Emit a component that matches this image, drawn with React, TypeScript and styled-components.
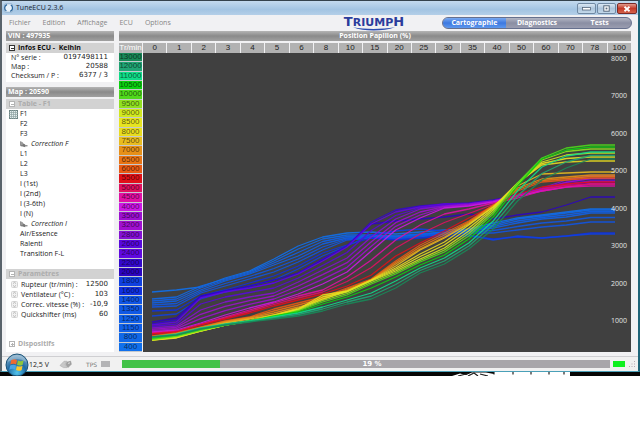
import React from 'react';
import styled, { createGlobalStyle } from 'styled-components';

const UI = '"Open Sans", "Noto Sans", sans-serif';
const WIDE = '"DejaVu Sans", sans-serif';
const NARROW = '"Liberation Sans", Arial, sans-serif';

const Global = createGlobalStyle`
  * { box-sizing: border-box; }
  body { margin: 0; background: #fff; font-family: ${UI}; font-size: 7px; color: #222; }
  button { border: 0; padding: 0; margin: 0; background: none; font: inherit; color: inherit; text-align: left; }
  ul { list-style: none; margin: 0; padding: 0; }
  h1, h2 { margin: 0; font: inherit; }
`;

const Desktop = styled.div`
  background: #fff;
`;

const Window = styled.div`
  display: flex;
  flex-direction: column;
  background: #f1f1f3;
  border-top: 1px solid #34424c;
  border-left: 2px solid #59636b;
  border-right: 2px solid #1f6478;
  border-bottom: 1px solid #4aa0b8;
`;

const TitleBar = styled.header`
  display: flex;
  align-items: center;
  height: 14px;
  padding: 0 1px 0 2px;
  gap: 3px;
  background: linear-gradient(#c3d9ee, #a3c4e2 60%, #b4cfe8);
`;

const Title = styled.h1`
  flex: 1;
  font-size: 7px;
  line-height: 12px;
  color: #1a2530;
`;

const WindowButtons = styled.div`
  display: flex;
  align-self: flex-start;
  margin-top: 2px;
`;

const WindowButton = styled.button<{ $close?: boolean }>`
  display: grid;
  place-items: center;
  width: ${(p) => (p.$close ? 20 : 19)}px;
  height: 11px;
  border: 1px solid ${(p) => (p.$close ? '#7b2a26' : '#7089a3')};
  border-radius: 2px;
  background: ${(p) => (p.$close ? 'linear-gradient(#e29a8c, #c43a28 50%, #d4644c)' : 'linear-gradient(#dbe8f4, #adc5dc 50%, #c3d9ea)')};
  & + & { margin-left: 1px; }
`;

const MenuBar = styled.div`
  display: flex;
  align-items: center;
  height: 16px;
  padding: 0 6px 0 7px;
`;

const Menus = styled.nav`
  display: flex;
  flex: 1;
  gap: 12px;
`;

const MenuButton = styled.button`
  font-size: 7px;
  line-height: 12px;
  color: #868686;
`;

const Tabs = styled.div`
  display: flex;
  width: 190px;
  height: 12px;
  margin-left: 34px;
  border: 1px solid #66708e;
  border-radius: 6px;
  overflow: hidden;
  background: linear-gradient(#b3b6c4, #8a8ea3 50%, #9a9db0);
`;

const Tab = styled.button<{ $active?: boolean }>`
  flex: 1;
  text-align: center;
  font-weight: bold;
  font-size: 7px;
  line-height: 10px;
  color: #fff;
  background: ${(p) => (p.$active ? 'linear-gradient(#79a9f0, #3c78e0 50%, #5e98ee)' : 'none')};
`;

const Body = styled.div`
  display: flex;
  gap: 5px;
  padding: 0 7px 4px 4px;
`;

const Sidebar = styled.aside`
  display: flex;
  flex-direction: column;
  width: 108px;
`;

const Strip = styled.h2<{ $center?: boolean }>`
  height: 10px;
  padding: 0 2px;
  font-weight: bold;
  font-size: 7px;
  line-height: 10px;
  color: #fff;
  text-align: ${(p) => (p.$center ? 'center' : 'left')};
  background: linear-gradient(#b4b4b4, #8a8a8a 50%, #a0a0a0);
`;

const Panel = styled.section<{ $grow?: boolean }>`
  background: #fff;
  margin-top: 2px;
  flex: ${(p) => (p.$grow ? 1 : 'none')};
`;

const InfoPanel = styled(Panel)`
  padding-bottom: 2px;
  margin-bottom: 5px;
`;

const Group = styled.button<{ $strong?: boolean; $plain?: boolean }>`
  display: flex;
  align-items: center;
  gap: 3px;
  width: 100%;
  height: 10px;
  padding-left: 3px;
  font-weight: bold;
  font-size: 7px;
  line-height: 10px;
  white-space: pre;
  color: ${(p) => (p.$strong ? '#111' : '#acacac')};
  background: ${(p) => (p.$plain ? 'none' : '#d2d2d2')};
`;

const Facts = styled.table<{ $inset?: boolean }>`
  width: 100%;
  border-collapse: collapse;
  th, td {
    padding: 0;
    height: ${(p) => (p.$inset ? 10 : 9)}px;
    line-height: 9px;
    font-size: 7px;
    vertical-align: middle;
    white-space: nowrap;
  }
  th { font-weight: normal; text-align: left; padding-left: 5px; }
  td { text-align: right; padding-right: 6px; font-family: ${WIDE}; }
`;

const ParamName = styled.span`
  display: flex;
  align-items: center;
  gap: 3px;
`;

const Tree = styled.ul`
  padding-bottom: 10px;
`;

const TreeRow = styled.button<{ $child?: boolean }>`
  display: flex;
  align-items: center;
  height: 10px;
  width: 100%;
  line-height: 10px;
  font-size: 7px;
  font-style: ${(p) => (p.$child ? 'italic' : 'normal')};
  color: #222;
`;

const Gutter = styled.span<{ $child?: boolean }>`
  display: flex;
  width: ${(p) => (p.$child ? 25 : 14)}px;
  padding-left: ${(p) => (p.$child ? 14 : 3)}px;
`;

const Devices = styled.div`
  padding: 20px 0 3px;
`;

const Main = styled.main`
  flex: 1;
  display: flex;
  flex-direction: column;
  min-width: 0;
`;

const Plot = styled.div`
  flex: 1;
  display: grid;
  grid-template-columns: 24px 1fr;
  grid-template-rows: 10px 1fr;
  margin-top: 2px;
`;

const Corner = styled.div`
  margin-right: 1px;
  font-family: ${NARROW};
  font-size: 8px;
  line-height: 10px;
  text-align: center;
  color: #fff;
  background: #b4b4b4;
`;

const Throttle = styled.div`
  display: grid;
  grid-template-columns: repeat(20, 1fr);
  gap: 1px;
`;

const ThrottleCell = styled.div`
  font-family: ${NARROW};
  font-size: 8px;
  line-height: 10px;
  text-align: center;
  color: #222;
  background: #b2b2b2;
`;

const RpmColumn = styled.div`
  display: grid;
  grid-template-rows: repeat(32, 1fr);
  background: #c4c8cc;
  margin-right: 1px;
`;

const RpmCell = styled.div<{ $color: string }>`
  border-bottom: 1px solid #c4c8cc;
  font-family: ${NARROW};
  font-size: 8px;
  line-height: 8px;
  text-align: center;
  color: rgba(0, 0, 0, 0.62);
  background: ${(p) => p.$color};
`;

const Chart = styled.div`
  position: relative;
  background: #404040;
`;

const Curves = styled.svg`
  display: block;
  width: 100%;
  height: 299px;
`;

const Scale = styled.div`
  position: absolute;
  top: 0;
  right: 4px;
  bottom: 26px;
  display: flex;
  flex-direction: column;
  justify-content: space-between;
  font-size: 7px;
  line-height: 11px;
  color: #e4e4e4;
`;

const StatusBar = styled.footer`
  display: flex;
  align-items: center;
  height: 15px;
  padding: 0 2px 0 4px;
  border-top: 1px solid #cfcfd2;
  background: #f1f1f1;
`;

const StatusInfo = styled.div`
  display: flex;
  align-items: center;
  width: 116px;
  padding-left: 23px;
`;

const Volts = styled.span`
  width: 30px;
`;

const Tps = styled.span`
  flex: 1;
  margin-left: 14px;
  font-family: ${WIDE};
  font-size: 6px;
  color: #777;
`;

const TpsBox = styled.span`
  width: 9px;
  height: 6px;
  margin-right: 12px;
  background: #b4b4b6;
`;

const Progress = styled.div`
  flex: 1;
  display: grid;
  height: 8px;
  background: #a8a6aa;
`;

const ProgressFill = styled.div`
  grid-area: 1 / 1;
  background: #42c248;
`;

const ProgressLabel = styled.span`
  grid-area: 1 / 1;
  text-align: center;
  padding-left: 12px;
  font-family: ${WIDE};
  font-weight: bold;
  font-size: 7px;
  line-height: 8px;
  color: #fff;
`;

const Led = styled.span`
  width: 12px;
  height: 6px;
  margin: 0 3px;
  background: #10f020;
`;

const Taskbar = styled.div`
  position: relative;
  display: flex;
  height: 4px;
  background: #050505;
`;

const Orb = styled.button`
  position: absolute;
  left: 5px;
  bottom: -1px;
  height: 24px;
`;

const Thumb = styled.svg`
  margin-left: auto;
  margin-right: 70px;
`;

const AXIS = [0, 1, 2, 3, 4, 5, 6, 8, 10, 15, 20, 25, 30, 35, 40, 50, 60, 70, 78, 100];

const RPM: [number, string][] = [
  [13000, '#188858'], [12000, '#20a474'], [11000, '#10dc88'], [10500, '#0cd010'],
  [10000, '#50d81c'], [9500, '#90e020'], [9000, '#d0e820'], [8500, '#e6e420'],
  [8000, '#e8dc20'], [7500, '#e8bc20'], [7000, '#e69018'], [6500, '#e87414'],
  [6000, '#e85a14'], [5500, '#e01018'], [5000, '#e01060'], [4500, '#e010a4'],
  [4000, '#cc18e4'], [3500, '#9c10d0'], [3200, '#a010d0'], [2800, '#8410d4'],
  [2600, '#5808dc'], [2400, '#6008e0'], [2200, '#3408cc'], [2000, '#2c04c0'],
  [1800, '#1040e0'], [1600, '#1030e0'], [1400, '#1054e4'], [1350, '#1058e4'],
  [1250, '#1060e8'], [1150, '#1060e8'], [800, '#1068e8'], [400, '#1070ec'],
];

/* Measured curves; engine speeds between two of them are interpolated. */
const MEASURED: Record<number, number[]> = {
  13000: [337, 335, 329, 325, 322, 319, 316, 311, 304, 299, 288, 273, 264, 249, 229, 201, 180, 168, 159, 159],
  11000: [337, 334, 328, 324, 321, 317, 313, 307, 300, 293, 281, 268, 258, 243, 221, 191, 167, 156, 152, 152],
  10500: [338, 335, 329, 325, 321, 316, 312, 304, 297, 288, 277, 265, 255, 239, 217, 186, 159, 150, 147, 147],
  10000: [339, 336, 330, 325, 321, 317, 311, 302, 295, 284, 274, 262, 252, 236, 214, 183, 158, 148, 145, 145],
  9000: [340, 337, 331, 325, 321, 317, 310, 299, 292, 281, 271, 259, 248, 231, 210, 184, 162, 155, 153, 153],
  8000: [340, 338, 331, 325, 321, 315, 309, 295, 291, 280, 268, 254, 242, 225, 207, 183, 165, 162, 161, 161],
  7500: [338, 335, 329, 323, 319, 315, 308, 299, 291, 280, 266, 250, 238, 224, 207, 186, 174, 173, 172, 172],
  7000: [337, 334, 328, 322, 318, 313, 307, 300, 290, 280, 264, 249, 237, 223, 206, 188, 179, 177, 175, 175],
  6000: [336, 333, 327, 321, 317, 309, 303, 297, 288, 279, 261, 245, 233, 221, 205, 191, 182, 180, 178, 178],
  5500: [334, 332, 325, 319, 313, 306, 300, 294, 286, 275, 256, 243, 231, 218, 206, 194, 187, 184, 182, 182],
  4500: [333, 331, 324, 317, 310, 303, 296, 290, 277, 260, 240, 225, 214, 209, 203, 198, 191, 187, 186, 186],
  4000: [332, 330, 323, 315, 308, 302, 294, 284, 272, 251, 230, 218, 208, 206, 202, 196, 191, 187, 184, 184],
  2800: [328, 326, 310, 302, 297, 293, 282, 270, 258, 237, 219, 209, 206, 204, 201, 195, 188, 180, 176, 176],
  2400: [325, 322, 298, 292, 288, 283, 274, 261, 247, 224, 212, 207, 204, 204, 201, 196, 190, 184, 181, 181],
  2200: [324, 320, 297, 291, 288, 283, 273, 259, 246, 222, 210, 206, 204, 203, 200, 195, 189, 185, 183, 183],
  2000: [322, 318, 296, 291, 286, 280, 273, 260, 246, 224, 221, 219, 217, 214, 219, 215, 212, 205, 197, 197],
  1800: [316, 314, 299, 292, 286, 280, 269, 256, 246, 235, 231, 229, 231, 235, 240, 236, 238, 236, 234, 234],
  1600: [311, 310, 296, 290, 283, 276, 266, 253, 245, 238, 240, 238, 236, 236, 239, 237, 238, 236, 233, 233],
  1400: [307, 306, 293, 286, 279, 272, 262, 250, 240, 238, 239, 237, 234, 233, 233, 230, 227, 225, 222, 222],
  1250: [303, 301, 290, 281, 274, 265, 256, 244, 238, 237, 237, 235, 233, 231, 228, 223, 219, 217, 213, 213],
  800: [299, 297, 286, 279, 272, 261, 249, 239, 235, 235, 236, 234, 232, 230, 225, 219, 216, 213, 210, 210],
  400: [292, 290, 287, 278, 271, 259, 246, 237, 233, 232, 234, 232, 230, 229, 223, 218, 215, 212, 209, 209],
};

function curveFor(index: number): number[] {
  let above = index;
  let below = index;
  while (!MEASURED[RPM[above][0]]) above -= 1;
  while (!MEASURED[RPM[below][0]]) below += 1;
  const a = MEASURED[RPM[above][0]];
  const b = MEASURED[RPM[below][0]];
  const t = above === below ? 0 : (index - above) / (below - above);
  return a.map((v, i) => v + (b[i] - v) * t);
}

const STEP = 24.37;
const points = (ys: number[]) => ys.map((y, i) => `${(152 + i * STEP).toFixed(1)},${y.toFixed(1)}`).join(' ');
const DRAW_ORDER = RPM.map((_, i) => i).reverse();

function Toggle({ open, dark }: { open: boolean; dark?: boolean }) {
  const ink = dark ? '#333' : '#b4b4b4';
  return (
    <svg width="6" height="6" viewBox="0 0 6 6" shapeRendering="crispEdges">
      <rect x="0.5" y="0.5" width="5" height="5" fill="#fff" stroke={ink} />
      <path d={open ? 'M1.5 3H4.5' : 'M1.5 3H4.5M3 1.5V4.5'} stroke={ink} />
    </svg>
  );
}

function AppIcon() {
  return (
    <svg width="9" height="10" viewBox="0 0 9 10">
      <rect x="0.5" y="0.8" width="8" height="8.4" rx="1.5" fill="#e9f3fb" stroke="#8fb0ce" />
      <path d="M3 1.6A3.6 3.6 0 0 0 2.4 8M6.2 8.4A3.6 3.6 0 0 0 6.8 2" fill="none" stroke="#2d679c" strokeWidth="1.2" />
    </svg>
  );
}

function GridIcon() {
  return (
    <svg width="9" height="9" viewBox="0 0 9 9">
      <rect x="0.5" y="0.5" width="8" height="8" fill="#e4eeee" stroke="#6f8585" />
      <path d="M0 2.5H9M0 4.5H9M0 6.5H9M2.5 0V9M4.5 0V9M6.5 0V9" stroke="#8fa3a3" strokeWidth="0.7" />
    </svg>
  );
}

function BranchIcon() {
  return (
    <svg width="8" height="7" viewBox="0 0 8 7">
      <path d="M0.8 0.3V4.8H7.5M2 1V4.5" fill="none" stroke="#666" strokeWidth="1" />
      <path d="M2.5 2L5.2 3.4V6.2L2.5 5.2Z" fill="#777" />
    </svg>
  );
}

function ParamIcon() {
  return (
    <svg width="7" height="7" viewBox="0 0 7 7">
      <rect x="0.5" y="0.5" width="6" height="6" rx="1" fill="#f1f1f1" stroke="#d4d4d4" />
      <path d="M2 2.6L3.5 1.4L5 2.6M2 4.4L3.5 5.6L5 4.4" fill="none" stroke="#aaa" strokeWidth="0.8" />
    </svg>
  );
}

function PlugIcon() {
  return (
    <svg width="13" height="9" viewBox="0 0 13 9">
      <path d="M1 5.5L5 1.3H8L6 4.2L8 7.6H4.5Z" fill="#c8c8c8" stroke="#b0b0b0" strokeWidth="0.7" />
      <path d="M8 2.2L11.6 1.2L12.3 4.2L9 7.5L7 4.5Z" fill="#a2a2a2" stroke="#8e8e8e" strokeWidth="0.6" />
      <path d="M9 3.4L11 2.8" stroke="#eee" strokeWidth="0.8" />
    </svg>
  );
}

const LogoMark = styled.div`
  display: grid;
  justify-items: center;
  width: 68px;
  height: 16px;
  font-family: ${WIDE};
  font-weight: bold;
  color: #2b3c9c;
`;

const LogoText = styled.span`
  grid-area: 1 / 1;
  font-size: 11px;
  line-height: 14px;
  big { font-size: 13px; }
`;

const LogoSwoosh = styled.svg`
  grid-area: 1 / 1;
  align-self: end;
`;

function Logo() {
  return (
    <LogoMark>
      <LogoText><big>T</big>RIUMP<big>H</big></LogoText>
      <LogoSwoosh width="46" height="4" viewBox="0 0 46 4">
        <path d="M2 0.3C14 2.6 30 2.6 44 0.3C32 4.6 13 4.6 2 0.3Z" fill="#2b4cb0" />
      </LogoSwoosh>
    </LogoMark>
  );
}

function StartOrb() {
  return (
    <svg width="24" height="24" viewBox="0 0 24 24">
      <defs>
        <radialGradient id="orb" cx="0.5" cy="0.85" r="0.85">
          <stop offset="0" stopColor="#52c4ec" />
          <stop offset="0.5" stopColor="#1e6aa4" />
          <stop offset="1" stopColor="#8fb4cc" />
        </radialGradient>
      </defs>
      <circle cx="12" cy="12" r="11" fill="url(#orb)" stroke="#1c5378" />
      <path d="M6.2 7.2Q9 5.2 12 7L11.2 11.4Q8.2 9.8 5.3 11.6Z" fill="#ee6a30" />
      <path d="M12.9 7.5Q15.6 9 18.6 7.3L17.7 11.7Q15 13.4 12 11.8Z" fill="#8dc63c" />
      <path d="M5.1 12.6Q8 10.9 11 12.4L10.2 16.6Q7.4 15 4.3 16.8Z" fill="#4aa4e6" />
      <path d="M11.8 12.9Q14.6 14.4 17.5 12.7L16.7 16.9Q14 18.6 11 17Z" fill="#fbc82c" />
      <path d="M2.5 9A10 10 0 0 1 21.5 9Q12 3 2.5 9Z" fill="#fff" opacity="0.25" />
    </svg>
  );
}

const TREE: { label: string; child?: boolean; grid?: boolean }[] = [
  { label: 'F1', grid: true }, { label: 'F2' }, { label: 'F3' }, { label: 'Correction F', child: true },
  { label: 'L1' }, { label: 'L2' }, { label: 'L3' }, { label: 'I (1st)' }, { label: 'I (2nd)' },
  { label: 'I (3-6th)' }, { label: 'I (N)' }, { label: 'Correction I', child: true },
  { label: 'Air/Essence' }, { label: 'Ralenti' }, { label: 'Transition F-L' },
];

const PARAMS = [
  ['Rupteur (tr/min) :', '12500'],
  ['Ventilateur (°C) :', '103'],
  ['Correc. vitesse (%) :', '-10,9'],
  ['Quickshifter (ms)', '60'],
];

const PROGRESS = 19;

export default function App() {
  return (
    <Desktop>
      <Global />
      <Window>
        <TitleBar>
          <AppIcon />
          <Title>TuneECU 2.3.6</Title>
          <WindowButtons>
            <WindowButton aria-label="Minimize">
              <svg width="9" height="5" viewBox="0 0 9 5"><rect x="0.5" y="1.5" width="8" height="2.5" fill="#fff" stroke="#56687c" strokeWidth="0.8" /></svg>
            </WindowButton>
            <WindowButton aria-label="Maximize">
              <svg width="7" height="7" viewBox="0 0 7 7"><rect x="0.8" y="0.8" width="5.4" height="5.4" fill="#fff" stroke="#56687c" /><rect x="2.6" y="2.6" width="1.8" height="1.8" fill="#56687c" /></svg>
            </WindowButton>
            <WindowButton $close aria-label="Close">
              <svg width="8" height="6" viewBox="0 0 8 6"><path d="M1.5 0.8L6.5 5.2M6.5 0.8L1.5 5.2" stroke="#fff" strokeWidth="1.8" /></svg>
            </WindowButton>
          </WindowButtons>
        </TitleBar>
        <MenuBar>
          <Menus>
            {['Fichier', 'Edition', 'Affichage', 'ECU', 'Options'].map((m) => <MenuButton key={m}>{m}</MenuButton>)}
          </Menus>
          <Logo />
          <Tabs role="tablist">
            <Tab role="tab" aria-selected $active>Cartographie</Tab>
            <Tab role="tab">Diagnostics</Tab>
            <Tab role="tab">Tests</Tab>
          </Tabs>
        </MenuBar>
        <Body>
          <Sidebar>
            <Strip>VIN : 497935</Strip>
            <InfoPanel>
              <Group $strong><Toggle open dark />Infos ECU -  Keihin</Group>
              <Facts>
                <tbody>
                  <tr><th scope="row">N° série :</th><td>0197498111</td></tr>
                  <tr><th scope="row">Map :</th><td>20588</td></tr>
                  <tr><th scope="row">Checksum / P :</th><td>6377 / 3</td></tr>
                </tbody>
              </Facts>
            </InfoPanel>
            <Strip>Map : 20590</Strip>
            <Panel $grow>
              <Group><Toggle open />Table - F1</Group>
              <Tree>
                {TREE.map((row) => (
                  <li key={row.label}>
                    <TreeRow $child={row.child}>
                      <Gutter $child={row.child}>{row.grid && <GridIcon />}{row.child && <BranchIcon />}</Gutter>
                      {row.label}
                    </TreeRow>
                  </li>
                ))}
              </Tree>
              <Group><Toggle open />Paramètres</Group>
              <Facts $inset>
                <tbody>
                  {PARAMS.map(([name, value]) => (
                    <tr key={name}><th scope="row"><ParamName><ParamIcon />{name}</ParamName></th><td>{value}</td></tr>
                  ))}
                </tbody>
              </Facts>
              <Devices>
                <Group $plain><Toggle open={false} />Dispositifs</Group>
              </Devices>
            </Panel>
          </Sidebar>
          <Main>
            <Strip $center>Position Papillon (%)</Strip>
            <Plot>
              <Corner>Tr/min</Corner>
              <Throttle>{AXIS.map((v) => <ThrottleCell key={v}>{v}</ThrottleCell>)}</Throttle>
              <RpmColumn>{RPM.map(([rpm, color]) => <RpmCell key={rpm} $color={color}>{rpm}</RpmCell>)}</RpmColumn>
              <Chart>
                <Curves viewBox="143 53 488 299" preserveAspectRatio="none" role="img" aria-label="Cartographie F1">
                  {DRAW_ORDER.map((i) => (
                    <polyline key={i} points={points(curveFor(i))} fill="none" stroke={RPM[i][1]} strokeWidth="1.3" strokeLinejoin="round" opacity="0.9" />
                  ))}
                </Curves>
                <Scale>
                  {[8000, 7000, 6000, 5000, 4000, 3000, 2000, 1000].map((v) => <span key={v}>{v}</span>)}
                </Scale>
              </Chart>
            </Plot>
          </Main>
        </Body>
        <StatusBar>
          <StatusInfo>
            <Volts>12,5 V</Volts>
            <PlugIcon />
            <Tps>TPS</Tps>
            <TpsBox />
          </StatusInfo>
          <Progress role="progressbar" aria-valuenow={PROGRESS} aria-valuemin={0} aria-valuemax={100}>
            <ProgressFill style={{ width: `${PROGRESS + 1}%` }} />
            <ProgressLabel>{PROGRESS} %</ProgressLabel>
          </Progress>
          <Led />
          <svg width="8" height="8" viewBox="0 0 8 8">
            <path d="M6 1h1v1H6zM6 3.5h1v1H6zM6 6h1v1H6zM3.5 3.5h1v1h-1zM3.5 6h1v1h-1zM1 6h1v1H1z" fill="#b7a9b4" />
          </svg>
        </StatusBar>
      </Window>
      <Taskbar>
        <Orb aria-label="Start"><StartOrb /></Orb>
        <Thumb width="118" height="4" viewBox="0 0 118 4">
          <path d="M0 4L8 1.5L14 3L20 0.5L34 0.5L42 2V0H118V4Z" fill="#fff" />
          <path d="M6 4L16 1.5M16 4L22 1L26 4M28 2L36 4M42 0V2.5M61 0V2.5M79 0V2.5M97 0V2.5M112 0V2.5" stroke="#222" strokeWidth="1.2" fill="none" />
        </Thumb>
      </Taskbar>
    </Desktop>
  );
}
